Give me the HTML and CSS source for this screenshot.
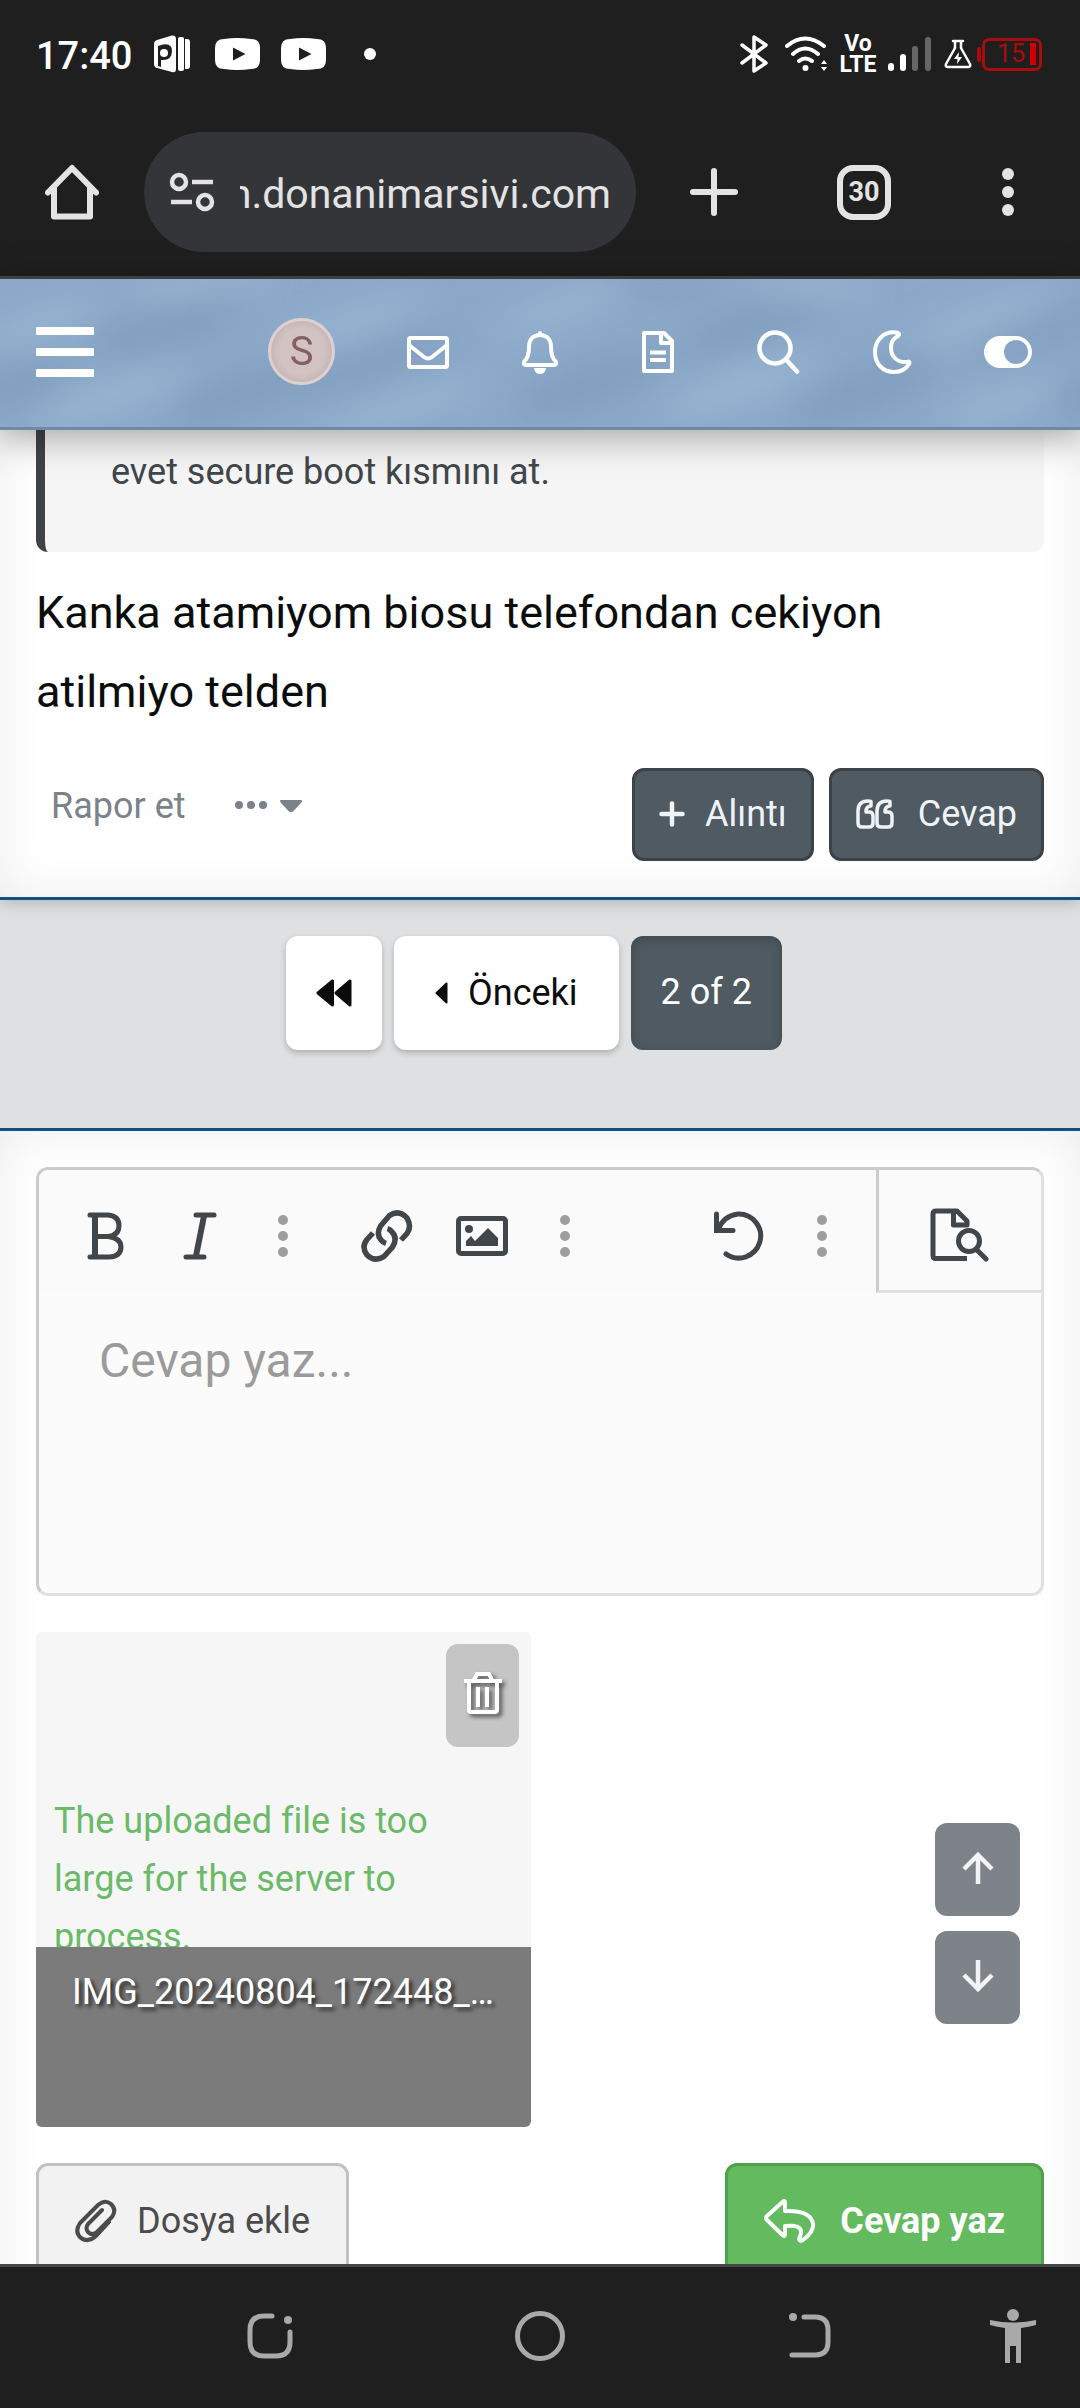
FILE: index.html
```html
<!DOCTYPE html>
<html lang="tr">
<head>
<meta charset="utf-8">
<meta name="viewport" content="width=device-width, initial-scale=1">
<title>Donanım Arşivi Forum</title>
<link rel="stylesheet" href="styles.css">
</head>
<body>
<div class="statusbar">
  <div class="status-left">
    <span class="clock">17:40</span>
    <svg width="36" height="38" viewBox="0 0 36 38" fill="#fff"><path fill-rule="evenodd" d="M0 9Q0 6 3 5L18 0.500Q22 0 22 4V34Q22 38 18 37L3 33Q0 32 0 29ZM4 11V31L7 32V25Q18 26 18 16Q18 8 9 9.500Z"/><circle cx="10" cy="18" r="4"/><rect x="24" y="2" width="6" height="34" rx="2"/><path d="M31 4h2q3 0 3 3v24q0 3-3 3h-2z"/></svg>
    <svg class="yt" width="45" height="32" viewBox="0 0 45 32"><path fill="#fff" d="M9 1Q22-1 36 1Q45 1 45 10V22Q45 31 36 31Q22 33 9 31Q0 31 0 22V10Q0 1 9 1Z"/><path fill="#1f1f1f" d="M18 9.500L30.500 16L18 22.500Z"/></svg>
    <svg class="yt2" width="45" height="32" viewBox="0 0 45 32"><path fill="#fff" d="M9 1Q22-1 36 1Q45 1 45 10V22Q45 31 36 31Q22 33 9 31Q0 31 0 22V10Q0 1 9 1Z"/><path fill="#1f1f1f" d="M18 9.500L30.500 16L18 22.500Z"/></svg>
    <span class="more-dot"></span>
  </div>
  <div class="status-right">
    <svg class="bt" width="28" height="40" viewBox="0 0 28 40" fill="none" stroke="#fff" stroke-width="3.500" stroke-linejoin="round" stroke-linecap="round"><path d="M2 11L26 29L14 37V3L26 11L2 29"/></svg>
    <svg class="wifi" width="43" height="36" viewBox="0 0 43 36" fill="none" stroke="#fff" stroke-width="4" stroke-linecap="round"><path d="M2 10Q20-5 39 10M8 18Q20 7 33 18M14 25Q20 20 27 25"/><circle cx="20.500" cy="32" r="3" fill="#fff" stroke="none"/><path fill="#fff" stroke="none" d="M36 28l3-4 3 4zM36 31l3 4 3-4z"/></svg>
    <span class="volte"><span>Vo</span><span>LTE</span></span>
    <svg class="signal" width="43" height="34" viewBox="0 0 43 34"><rect y="26" width="6" height="8" rx="3" fill="#fff"/><rect x="12" y="17" width="6" height="17" rx="3" fill="#fff"/><rect x="24" y="9" width="6" height="25" rx="3" fill="#666"/><rect x="37" width="6" height="34" rx="3" fill="#666"/></svg>
    <svg width="28" height="30" viewBox="0 0 28 30" fill="none" stroke="#fff" stroke-width="2.500" stroke-linejoin="round" stroke-linecap="round"><path d="M9 2H19M11 2V9L2 25Q1 28 4 28H24Q27 28 26 25L17 9V2"/><path fill="#fff" stroke="none" d="M15 13L10 20h3.500l-.5 5 5-7h-3.500z"/></svg>
    <span class="battery"><i></i><b>15</b><em></em></span>
  </div>
</div>

<div class="browserbar">
  <button class="bar-btn home" aria-label="Home"><svg width="54" height="56" viewBox="0 0 54 56" fill="none" stroke="#e3e3e3" stroke-width="6" stroke-linejoin="round" stroke-linecap="round"><path d="M3 28.500L27 4L51 28.500M9 24V52.500H45V24"/></svg></button>
  <button class="omnibox">
    <svg width="46" height="40" viewBox="0 0 46 40" fill="none" stroke="#e3e3e3" stroke-width="4.500"><circle cx="10" cy="10" r="7"/><path d="M23 10H44M2 30H23"/><circle cx="36" cy="30" r="7"/></svg>
    <span class="url">forum.donanimarsivi.com</span>
  </button>
  <div class="bar-actions">
    <button class="bar-btn add" aria-label="New tab"><svg width="48" height="50" viewBox="0 0 48 50" fill="none" stroke="#e3e3e3" stroke-width="6" stroke-linecap="round"><path d="M24 4V46M3 25H45"/></svg></button>
    <button class="bar-btn"><span class="tabs">30</span></button>
    <button class="bar-btn" aria-label="Menu"><svg width="12" height="50" viewBox="0 0 12 50" fill="#e3e3e3"><circle cx="6" cy="7" r="6"/><circle cx="6" cy="25" r="6"/><circle cx="6" cy="43" r="6"/></svg></button>
  </div>
</div>

<header class="site-header">
  <svg class="clouds" viewBox="0 0 1080 148" preserveAspectRatio="none" aria-hidden="true">
    <defs><filter id="soft" x="-50%" y="-100%" width="200%" height="300%"><feGaussianBlur stdDeviation="16"/></filter></defs>
    <g filter="url(#soft)">
      <g fill="#819dbe">
        <ellipse cx="165" cy="48" rx="80" ry="20" transform="rotate(-18 165 48)"/><ellipse cx="240" cy="116" rx="75" ry="20" transform="rotate(-22 240 116)"/>
        <ellipse cx="370" cy="85" rx="90" ry="14" transform="rotate(-18 370 85)"/><ellipse cx="20" cy="105" rx="50" ry="18" transform="rotate(-18 20 105)"/>
        <ellipse cx="590" cy="105" rx="80" ry="20" transform="rotate(-20 590 105)"/><ellipse cx="760" cy="42" rx="90" ry="18" transform="rotate(-20 760 42)"/>
        <ellipse cx="865" cy="112" rx="80" ry="20" transform="rotate(-22 865 112)"/><ellipse cx="1050" cy="50" rx="90" ry="12" transform="rotate(-20 1050 50)"/>
        <ellipse cx="660" cy="5" rx="60" ry="10"/><ellipse cx="1085" cy="120" rx="30" ry="18"/>
      </g>
      <g fill="#98b6d3">
        <ellipse cx="200" cy="5" rx="70" ry="12" transform="rotate(-10 200 5)"/><ellipse cx="110" cy="118" rx="80" ry="14" transform="rotate(-20 110 118)"/>
        <ellipse cx="400" cy="130" rx="90" ry="12" transform="rotate(-18 400 130)"/><ellipse cx="350" cy="45" rx="80" ry="12" transform="rotate(-20 350 45)"/>
        <ellipse cx="810" cy="8" rx="60" ry="12"/><ellipse cx="740" cy="108" rx="80" ry="16" transform="rotate(-20 740 108)"/>
        <ellipse cx="980" cy="40" rx="80" ry="12" transform="rotate(-20 980 40)"/><ellipse cx="1000" cy="125" rx="60" ry="14" transform="rotate(-20 1000 125)"/>
        <ellipse cx="40" cy="45" rx="60" ry="12" transform="rotate(-20 40 45)"/><ellipse cx="560" cy="30" rx="70" ry="12" transform="rotate(-20 560 30)"/>
      </g>
    </g>
  </svg>
  <button class="icon-btn" aria-label="Menü"><svg width="58" height="50" viewBox="0 0 58 50" fill="#fff"><rect width="58" height="8" rx="1"/><rect y="21" width="58" height="8" rx="1"/><rect y="42" width="58" height="8" rx="1"/></svg></button>
  <nav class="tools">
    <a href="#" class="avatar">S</a>
    <a href="#" aria-label="Mesajlar"><svg width="42" height="44" viewBox="0 0 42 44" fill="none" stroke="#fff" stroke-width="4"><rect x="2" y="8" width="38" height="29" rx="1.500"/><path d="M2 15L17 27Q21 30 25 27L40 15"/></svg></a>
    <a href="#" aria-label="Bildirimler"><svg width="38" height="44" viewBox="0 0 38 44" fill="none" stroke="#fff" stroke-width="4" stroke-linejoin="round"><path d="M19 5C11 5 8 11 8 17C8 25 6 29 3 32Q2 35 5 35H33Q36 35 35 32C32 29 30 25 30 17C30 11 27 5 19 5Z"/><path stroke-linecap="round" d="M19 3V4"/><path fill="#fff" stroke="none" d="M13 38H25Q24 44 19 44Q14 44 13 38Z"/></svg></a>
    <a href="#" class="wide" aria-label="Yeni mesajlar"><svg width="32" height="44" viewBox="0 0 32 44" fill="none" stroke="#fff" stroke-width="4" stroke-linejoin="round"><path d="M2 3H22L30 11V41H2Z"/><path d="M19 3V13H30M8 22.500H24M8 30H24"/></svg></a>
    <a href="#" aria-label="Ara"><svg width="43" height="44" viewBox="0 0 43 44" fill="none" stroke="#fff" stroke-width="4.500" stroke-linecap="round"><circle cx="18" cy="18" r="15.500"/><path d="M29 29.500L40 41.500"/></svg></a>
    <a href="#" aria-label="Tema"><svg width="40" height="44" viewBox="0 0 40 44" fill="none" stroke="#fff" stroke-width="4" stroke-linejoin="round"><path d="M24 2.500C11 1 3 11 3 22C3 34 11 42 22 42C29 42 34 39 37 34C38 32 37 31 35 32C25 33 19 26 19 18C19 12 22 8 26 6C28 4 27 3 24 2.500Z"/></svg></a>
    <a href="#" aria-label="Görünüm"><svg width="48" height="44" viewBox="0 0 48 44"><path fill="#fff" fill-rule="evenodd" d="M16 6H32A16 16 0 0 1 32 38H16A16 16 0 0 1 16 6ZM32 10A12 12 0 1 0 32 34A12 12 0 1 0 32 10Z"/></svg></a>
  </nav>
</header>

<main class="page">
  <article class="panel message">
    <blockquote class="quote">evet secure boot kısmını at.</blockquote>
    <p class="message-text">Kanka atamiyom biosu telefondan cekiyon atilmiyo telden</p>
    <div class="message-actions">
      <div class="links">
        <a href="#">Rapor et</a>
        <a href="#" aria-label="Diğer"><svg width="68" height="20" viewBox="0 0 68 20" fill="#7c828a"><circle cx="4" cy="9" r="4"/><circle cx="16" cy="9" r="4"/><circle cx="28" cy="9" r="4"/><path d="M46 4H66Q68 4 66 7L58 15.500Q56 17 54 15.500L46 7Q44 4 46 4Z"/></svg></a>
      </div>
      <button class="btn dark"><svg width="26" height="26" viewBox="0 0 26 26" stroke="#f0f3f6" stroke-width="4.500" stroke-linecap="round"><path d="M13 2.500V23.500M2.500 13H23.500"/></svg>Alıntı</button>
      <button class="btn dark"><svg width="38" height="30" viewBox="0 0 38 30" fill="none" stroke="#f0f3f6" stroke-width="3.500" stroke-linejoin="round"><path d="M15 2.500V7Q10 7 10 13H13Q17 13 17 17V24Q17 28 13 28H6Q2 28 2 24V12Q2 2 12 2Q15 2 15 2.500Z"/><path d="M34 2.500V7Q29 7 29 13H32Q36 13 36 17V24Q36 28 32 28H25Q21 28 21 24V12Q21 2 31 2Q34 2 34 2.500Z"/></svg><span class="gap">Cevap</span></button>
    </div>
  </article>

  <nav class="pagination">
    <a href="#" class="page-link first" aria-label="İlk"><svg width="36" height="28" viewBox="0 0 36 28" fill="#0b0d0c" stroke="#0b0d0c" stroke-width="3" stroke-linejoin="round"><path d="M16.500 2V26L2 14ZM34 2V26L20 14Z"/></svg></a>
    <a href="#" class="page-link prev"><svg width="13" height="22" viewBox="0 0 13 22" fill="#0b0d0c" stroke="#0b0d0c" stroke-width="2" stroke-linejoin="round"><path d="M11.500 1.500V20.500L1.500 11Z"/></svg>Önceki</a>
    <a href="#" class="page-link current">2 of 2</a>
  </nav>

  <form class="panel reply">
    <div class="editor">
      <div class="toolbar">
        <button type="button" class="tool" aria-label="Kalın"><svg width="38" height="48" viewBox="0 0 38 48" fill="none" stroke="#41464a" stroke-width="5" stroke-linecap="round"><path d="M3 3H21Q32 4 32 13.500Q32 23.500 21 24.500H8M21 24.500Q34 26 34 35Q34 44.500 22 45H3"/><path stroke-width="6" d="M8 4V44"/></svg></button>
        <button type="button" class="tool" aria-label="İtalik"><svg width="34" height="48" viewBox="0 0 34 48" fill="none" stroke="#41464a" stroke-width="5" stroke-linecap="round"><path d="M13 3H31M3 45H21"/><path stroke-width="6" d="M21 4L13 44"/></svg></button>
        <button type="button" class="tool more" aria-label="Diğer"><svg width="10" height="42" viewBox="0 0 10 42" fill="#9d9ea1"><circle cx="5" cy="5" r="5"/><circle cx="5" cy="21" r="5"/><circle cx="5" cy="37" r="5"/></svg></button>
        <button type="button" class="tool link" aria-label="Bağlantı"><svg width="52" height="54" viewBox="0 0 52 54" fill="none" stroke="#41464a" stroke-width="5.500"><path d="M40 31L46 24.500Q51 17.500 46 9Q38 0 28.500 6.500L19.500 17Q15 25 20 31Q22 33.500 25 34.500"/><path d="M12 24L6 30.500Q0 38 6 46Q14 53.500 23 47.500L31.500 38Q37 29 31 23Q29.500 20.500 26.500 19.500"/></svg></button>
        <button type="button" class="tool" aria-label="Resim"><svg width="52" height="40" viewBox="0 0 52 40"><rect x="2.500" y="2.500" width="47" height="35" rx="2.500" fill="none" stroke="#41464a" stroke-width="5"/><circle cx="13" cy="13" r="4" fill="#41464a"/><path fill="#41464a" d="M10 30V25L15 20L19 25L32 12L42 22V30Z"/></svg></button>
        <button type="button" class="tool more" aria-label="Diğer"><svg width="10" height="42" viewBox="0 0 10 42" fill="#9d9ea1"><circle cx="5" cy="5" r="5"/><circle cx="5" cy="21" r="5"/><circle cx="5" cy="37" r="5"/></svg></button>
        <button type="button" class="tool undo" aria-label="Geri al"><svg width="52" height="52" viewBox="0 0 52 52" fill="none" stroke="#41464a" stroke-width="5" stroke-linecap="round"><path d="M5 20Q10 6 25 4A22 22 0 1 1 13 44"/><path d="M3.500 4V20.500H20"/></svg></button>
        <button type="button" class="tool more last" aria-label="Diğer"><svg width="10" height="42" viewBox="0 0 10 42" fill="#9d9ea1"><circle cx="5" cy="5" r="5"/><circle cx="5" cy="21" r="5"/><circle cx="5" cy="37" r="5"/></svg></button>
        <button type="button" class="tool preview" aria-label="Önizleme"><svg width="60" height="54" viewBox="0 0 60 54" fill="none" stroke="#41464a" stroke-width="5" stroke-linejoin="round"><path d="M37 50.500H6Q3 50.500 3 47.500V6Q3 3 6 3H27L37 13V17H23.500V3"/><circle cx="39" cy="33" r="13" fill="#fafafa" stroke="none"/><circle cx="39" cy="33" r="10.500"/><path stroke-linecap="round" d="M47 42L56 51"/></svg></button>
      </div>
      <textarea class="editor-text" placeholder="Cevap yaz..." aria-label="Cevap"></textarea>
    </div>

    <div class="attachment">
      <div class="attachment-body">
        <button type="button" class="trash" aria-label="Sil"><svg width="38" height="44" viewBox="0 0 38 44" fill="none" stroke="#fff" stroke-width="4"><path d="M0 9H38M10 8L13 2H25L28 8M5 9V38Q5 40 7 40H31Q33 40 33 38V9M14 15V35M23 15V35"/></svg></button>
        <p class="error">The uploaded file is too large for the server to process.</p>
      </div>
      <div class="attachment-name">IMG_20240804_172448_…</div>
    </div>

    <div class="submit-row">
      <button type="button" class="btn light"><svg width="42" height="44" viewBox="0 0 42 44" fill="none" stroke="#4b4b4b" stroke-width="4" stroke-linecap="round"><path d="M34 23L21 37Q13 44 6 39Q-1 33 5 24L23 6Q30 0 36 5Q42 11 37 18L22 33Q17 37 13 33Q10 29 13 25L27 11"/></svg>Dosya ekle</button>
      <button type="submit" class="btn green"><svg width="52" height="44" viewBox="0 0 52 44" fill="none" stroke="#fff" stroke-width="4" stroke-linejoin="round"><path d="M19 2.500L2.500 17.500Q1.500 19 2.500 20.500L19 36.500Q21 38 21 35V27Q38 25 37 34Q36 38 35 40Q36 43 39 41Q50 33 49 25Q47 11 21 12V4Q21 1 19 2.500Z"/></svg>Cevap yaz</button>
    </div>
  </form>

  <div class="scroll-buttons">
    <a href="#" aria-label="Yukarı"><svg width="32" height="34" viewBox="0 0 32 34" fill="none" stroke="#f2f3f5" stroke-width="4.500"><path d="M16 33V4M2 18L16 4L30 18"/></svg></a>
    <a href="#" aria-label="Aşağı"><svg width="32" height="34" viewBox="0 0 32 34" fill="none" stroke="#f2f3f5" stroke-width="4.500"><path d="M16 1V30M2 16L16 30L30 16"/></svg></a>
  </div>
</main>

<nav class="system-nav">
  <button aria-label="Recents"><svg width="46" height="46" viewBox="0 0 46 46" fill="none" stroke="#a9a9a9" stroke-width="5" stroke-linecap="round"><path d="M25 3H17Q3 3 3 17V29Q3 43 17 43H29Q43 43 43 29V19"/><circle cx="41" cy="7" r="4" fill="#a9a9a9" stroke="none"/></svg></button>
  <button aria-label="Home"><svg width="50" height="50" viewBox="0 0 50 50" fill="none" stroke="#a9a9a9" stroke-width="5"><circle cx="25" cy="25" r="22.500"/></svg></button>
  <button aria-label="Back"><svg width="42" height="46" viewBox="0 0 42 46" fill="none" stroke="#a9a9a9" stroke-width="5" stroke-linecap="round"><path d="M15 4H26Q39 4 39 17V29Q39 42 26 42H3"/><circle cx="4" cy="4" r="4" fill="#a9a9a9" stroke="none"/></svg></button>
  <button class="access" aria-label="Accessibility"><svg width="48" height="54" viewBox="0 0 48 54" fill="#a9a9a9"><circle cx="24" cy="6" r="6"/><path d="M1 11Q24 16 47 11V16Q40 18 32 19V54H27V37H21V54H16V19Q8 18 1 16Z"/></svg></button>
</nav>
</body>
</html>
```
FILE: styles.css
```css
* { box-sizing: border-box; }

body {
  margin: 0;
  height: 100vh;
  display: flex;
  flex-direction: column;
  overflow: hidden;
  background: #fff;
  font: 36px/58px Roboto, "Liberation Sans", sans-serif;
  color: #0b0d0c;
}

button, textarea { font: inherit; color: inherit; margin: 0; }
button { border: 0; padding: 0; background: none; }
a { color: inherit; text-decoration: none; }
svg { display: block; flex: none; }
p, blockquote { margin: 0; }

/* Phone status bar */
.statusbar {
  flex: none;
  height: 108px;
  padding: 0 38px 0 36px;
  display: flex;
  align-items: center;
  justify-content: space-between;
  background: #1f1f1f;
  color: #fff;
}
.status-left, .status-right { display: flex; align-items: center; }
.clock { font-size: 38px; font-weight: 500; margin-right: 22px; padding-top: 3px; }
.yt { margin-left: 25px; }
.yt2 { margin-left: 21px; }
.more-dot { width: 12px; height: 12px; border-radius: 50%; background: #fff; margin-left: 38px; }
.bt { margin-right: 17px; }
.wifi { margin-right: 10px; }
.volte {
  width: 40px;
  display: flex;
  flex-direction: column;
  align-items: center;
  font-size: 23px;
  line-height: 21px;
  font-weight: 700;
  margin-right: 10px;
}
.signal { margin-right: 13px; }
.battery {
  position: relative;
  width: 60px;
  height: 33px;
  margin-left: 10px;
  padding-right: 3px;
  border: 3px solid #a90c0c;
  border-radius: 7px;
  display: flex;
  align-items: center;
  justify-content: flex-end;
  gap: 5px;
  color: #a90c0c;
}
.battery i { position: absolute; left: -8px; top: 6px; width: 4px; height: 15px; border-radius: 2px; background: #a90c0c; }
.battery b { font-size: 25px; font-weight: 400; }
.battery em { width: 6px; height: 22px; background: #d00000; }

/* Browser toolbar */
.browserbar {
  flex: none;
  height: 171px;
  display: flex;
  align-items: center;
  background: #1f1f1f;
  border-bottom: 3px solid #46484a;
}
.bar-btn { width: 144px; display: flex; justify-content: center; }
.bar-btn.add { width: 156px; }
.home { flex: none; }
.omnibox {
  flex: 1;
  min-width: 0;
  height: 120px;
  border-radius: 60px;
  padding: 0 25px;
  display: flex;
  align-items: center;
  gap: 25px;
  background: #343539;
  color: #e3e3e3;
  font-size: 41px;
}
.url {
  flex: 1;
  min-width: 0;
  display: flex;
  justify-content: flex-end;
  padding-top: 4px;
  overflow: hidden;
  white-space: nowrap;
}
.bar-actions { flex: none; display: flex; align-items: center; }
.tabs {
  width: 54px;
  height: 55px;
  border: 6px solid #e3e3e3;
  border-radius: 16px;
  color: #e3e3e3;
  font-size: 27px;
  line-height: 43px;
  font-weight: 700;
  text-align: center;
}

/* Site header */
.site-header {
  position: relative;
  z-index: 2;
  flex: none;
  height: 151px;
  padding: 0 48px 3px 36px;
  display: flex;
  align-items: center;
  justify-content: space-between;
  background: #8ca9c9;
  border-bottom: 3px solid #7089a6;
  box-shadow: 0 6px 36px rgba(0, 0, 0, .35);
}
.clouds { position: absolute; left: 0; top: 0; width: 100%; height: 100%; }
.icon-btn, .tools { position: relative; }
.tools { display: flex; align-items: center; gap: 72px; }
.tools .wide { padding: 0 11px; }
.avatar {
  width: 67px;
  height: 67px;
  border-radius: 50%;
  border: 3px solid #dcd0d1;
  background: #d3c2c2;
  box-shadow: inset 0 0 9px rgba(0, 0, 0, .12);
  color: #855f5f;
  font-size: 40px;
  line-height: 61px;
  text-align: center;
}

/* Page content */
.page {
  position: relative;
  flex: 1;
  min-height: 0;
  overflow: hidden;
}
.panel { padding: 36px; background: #fff; box-shadow: inset 0 0 48px rgba(0, 0, 0, .08); }
.message {
  position: relative;
  z-index: 1;
  padding-top: 0;
  border-bottom: 3px solid #104f84;
  box-shadow: inset 0 0 48px rgba(0, 0, 0, .08), 0 3px 15px rgba(0, 0, 0, .2);
}
.quote {
  padding: 13px 66px 51px;
  border-left: 9px solid #3f4347;
  border-radius: 0 0 12px 12px;
  background: #f5f5f5;
  color: #41464a;
}
.message-text { margin-top: 21px; font-size: 45px; line-height: 79px; }
.message-actions { display: flex; align-items: flex-start; gap: 15px; margin-top: 37px; }
.links { flex: 1; display: flex; align-items: center; gap: 49px; padding: 9px 0 0 15px; color: #7c828a; }

.btn {
  display: flex;
  align-items: center;
  border: 3px solid;
  border-radius: 12px;
}
.dark { height: 93px; padding: 0 24px 2px; gap: 20px; background: #4f5a63; border-color: #3c4348; color: #f0f3f6; }
.dark .gap { padding-left: 4px; }

/* Pagination */
.pagination {
  display: flex;
  justify-content: center;
  gap: 12px;
  padding: 36px 12px 78px 0;
  background: #dfe0e2;
  border-bottom: 3px solid #104f84;
}
.page-link {
  height: 114px;
  border-radius: 12px;
  display: flex;
  align-items: center;
  background: #fff;
  box-shadow: 0 3px 6px rgba(0, 0, 0, .22);
}
.first { padding: 0 30px; }
.prev { padding: 0 41px; gap: 20px; }
.current { padding: 0 30px 3px; background: #4f5a63; color: #fff; box-shadow: inset 0 3px 12px rgba(0, 0, 0, .2); }

/* Reply editor */
.editor {
  border: 3px solid;
  border-color: #ccc #e0e0e0 #e0e0e0 #ccc;
  border-radius: 12px;
  background: #fbfbfb;
  overflow: hidden;
}
.toolbar { display: flex; height: 123px; padding-left: 20px; background: #fafafa; }
.tool { width: 94px; display: flex; align-items: center; justify-content: center; padding-top: 9px; }
.tool.more { width: 72px; }
.tool.link { width: 96px; margin-left: 20px; }
.tool.undo { margin-left: auto; }
.tool.last { margin-right: 18px; }
.tool.preview { width: 165px; border-left: 3px solid #ccc; border-bottom: 3px solid #e0e0e0; }
.editor-text {
  display: block;
  width: 100%;
  height: 300px;
  padding: 29px 60px;
  border: 0;
  outline: 0;
  resize: none;
  background: none;
  font-size: 48px;
  line-height: 78px;
}
.editor-text::placeholder { color: #9b9b9b; opacity: 1; }

/* Attachment */
.attachment { width: 495px; margin-top: 36px; border-radius: 6px; overflow: hidden; background: #f6f6f6; }
.attachment-body {
  height: 315px;
  padding: 12px 12px 0 18px;
  display: flex;
  flex-direction: column;
}
.trash {
  flex: none;
  align-self: flex-end;
  width: 73px;
  height: 103px;
  padding-bottom: 3px;
  border-radius: 12px;
  background: #c5c5c5;
  display: flex;
  align-items: center;
  justify-content: center;
}
.trash svg { filter: drop-shadow(3px 3px 2px rgba(0, 0, 0, .6)); }
.error { margin-top: 45px; padding-right: 60px; color: #6bba67; }
.attachment-name {
  position: relative;
  height: 180px;
  padding: 16px 36px;
  background: #7b7b7b;
  color: #fff;
  text-shadow: 3px 3px 4px rgba(0, 0, 0, .7);
  white-space: nowrap;
}

.submit-row { display: flex; justify-content: space-between; margin-top: 36px; }
.submit-row .btn { height: 117px; padding: 0 36px 2px; }
.light { gap: 20px; background: #f2f2f2; border-color: #c1c1c1; color: #4b4b4b; }
.green { gap: 24px; background: #63ba5f; border-color: #50a14c; color: #fff; font-weight: 700; }

.scroll-buttons {
  position: absolute;
  right: 60px;
  bottom: 240px;
  display: flex;
  flex-direction: column;
  gap: 15px;
}
.scroll-buttons a {
  width: 85px;
  height: 93px;
  padding-bottom: 4px;
  border-radius: 12px;
  background: #7d8389;
  display: flex;
  align-items: center;
  justify-content: center;
}

/* Phone navigation */
.system-nav {
  position: relative;
  flex: none;
  height: 144px;
  padding-bottom: 3px;
  display: flex;
  align-items: center;
  justify-content: center;
  background: #1f1f1f;
  border-top: 3px solid #474747;
}
.system-nav button { width: 270px; display: flex; justify-content: center; }
.system-nav .access { position: absolute; right: 43px; width: 48px; }
```
